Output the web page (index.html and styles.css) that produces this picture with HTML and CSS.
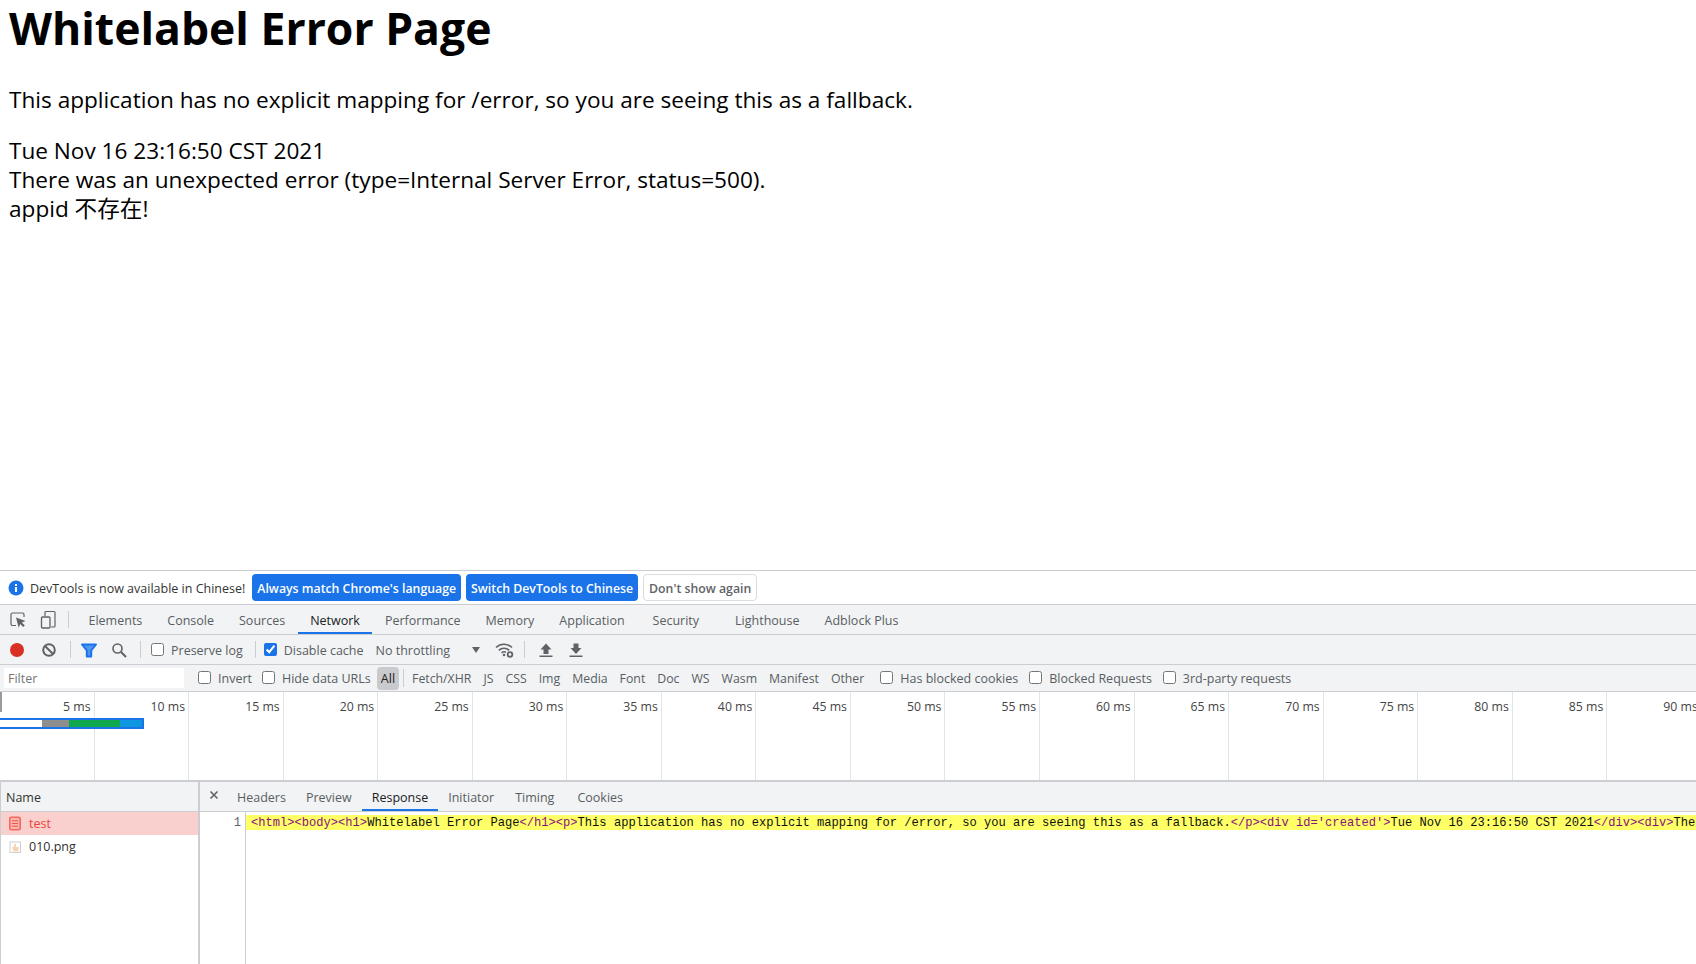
FILE: index.html
```html
<!DOCTYPE html>
<html lang="en">
<head>
<meta charset="utf-8">
<title>Whitelabel Error Page</title>
<link rel="stylesheet" href="styles.css">
</head>
<body>
<main class="page">
  <h1>Whitelabel Error Page</h1>
  <p>This application has no explicit mapping for /error, so you are seeing this as a fallback.</p>
  <div>Tue Nov 16 23:16:50 CST 2021</div>
  <div>There was an unexpected error (type=Internal Server Error, status=500).</div>
  <div>appid 不存在!</div>
</main>
<section class="devtools">
  <div class="infobar">
    <svg class="info-icon" width="16" height="16" viewBox="0 0 16 16"><circle cx="8" cy="8" r="7.5" fill="#1a73e8"/><rect x="7" y="7" width="2" height="5" fill="#fff"/><rect x="7" y="4" width="2" height="2" fill="#fff"/></svg>
    <span class="info-text">DevTools is now available in Chinese!</span>
    <button class="btn primary">Always match Chrome's language</button>
    <button class="btn primary">Switch DevTools to Chinese</button>
    <button class="btn plain">Don't show again</button>
  </div>
  <div class="tabbar">
    <svg class="tool" width="20" height="20" viewBox="0 0 20 20"><path d="M8 15.500H4.500A1.500 1.500 0 0 1 3 14V4.500A1.500 1.500 0 0 1 4.500 3h10A1.500 1.500 0 0 1 16 4.500V7" fill="none" stroke="#5f6368" stroke-width="1.200"/><path d="M8 7.500l9.500 3.500-3.700 1.500 3 3-1.600 1.600-3-3-1.500 3.700z" fill="#5f6368"/></svg>
    <svg class="tool" width="20" height="20" viewBox="0 0 20 20"><path d="M7 6V2.500a1 1 0 0 1 1-1h8a1 1 0 0 1 1 1V16a1 1 0 0 1-1 1h-3" fill="none" stroke="#5f6368" stroke-width="1.200"/><rect x="3.500" y="7" width="8.500" height="11" rx="1" fill="none" stroke="#5f6368" stroke-width="1.300"/></svg>
    <span class="sep tab-sep"></span>
    <span class="tab">Elements</span>
    <span class="tab">Console</span>
    <span class="tab">Sources</span>
    <span class="tab active">Network</span>
    <span class="tab">Performance</span>
    <span class="tab">Memory</span>
    <span class="tab">Application</span>
    <span class="tab tab-sec">Security</span>
    <span class="tab tab-far">Lighthouse</span>
    <span class="tab">Adblock Plus</span>
  </div>
  <div class="toolbar">
    <svg class="tool first-tool" width="18" height="18" viewBox="0 0 18 18"><circle cx="9" cy="9" r="7" fill="#d93025"/></svg>
    <svg class="tool clear" width="18" height="18" viewBox="0 0 18 18"><circle cx="9" cy="9" r="5.800" fill="none" stroke="#5f6368" stroke-width="2"/><path d="M5 5l8 8" stroke="#5f6368" stroke-width="2"/></svg>
    <span class="sep"></span>
    <svg class="tool funnel" width="18" height="18" viewBox="0 0 18 18"><path d="M2 3.500h14L11.200 9.500V15.500H6.800V9.500z" fill="#4f96f0" stroke="#1a73e8" stroke-width="2" stroke-linejoin="round"/></svg>
    <svg class="tool" width="18" height="18" viewBox="0 0 18 18"><circle cx="7.500" cy="7.500" r="4.500" fill="none" stroke="#5f6368" stroke-width="1.600"/><path d="M11 11l5 5" stroke="#5f6368" stroke-width="2"/></svg>
    <span class="sep"></span>
    <label class="check preserve"><input type="checkbox">Preserve log</label>
    <span class="sep"></span>
    <label class="check disable"><input type="checkbox" checked>Disable cache</label>
    <span class="throttle">No throttling</span>
    <span class="arrow"></span>
    <svg class="tool wifi" width="20" height="18" viewBox="0 0 20 18"><path d="M1 6.500a11.500 11.500 0 0 1 16 0M3.800 9.300a7.500 7.500 0 0 1 10.400 0M6.500 12a4 4 0 0 1 4.500-.8" fill="none" stroke="#5f6368" stroke-width="1.600"/><circle cx="9" cy="14" r="1.300" fill="#5f6368"/><circle cx="15" cy="13.500" r="2.300" fill="none" stroke="#5f6368" stroke-width="1.800"/></svg>
    <span class="sep"></span>
    <svg class="tool" width="18" height="18" viewBox="0 0 18 18"><path d="M9 2.500l5.500 6H11.500V13h-5V8.500H3.500zM2.500 14.500h13V16h-13z" fill="#5f6368"/></svg>
    <svg class="tool" width="18" height="18" viewBox="0 0 18 18"><path d="M6.500 2.500h5V7H14.500L9 13 3.500 7H6.500zM2.500 14.500h13V16h-13z" fill="#5f6368"/></svg>
  </div>
  <div class="filterbar">
    <span class="filter-input">Filter</span>
    <label class="check invert"><input type="checkbox">Invert</label>
    <label class="check"><input type="checkbox">Hide data URLs</label>
    <span class="chip">All</span>
    <span class="sep chip-sep"></span>
    <span class="type">Fetch/XHR</span>
    <span class="type">JS</span>
    <span class="type">CSS</span>
    <span class="type">Img</span>
    <span class="type">Media</span>
    <span class="type">Font</span>
    <span class="type">Doc</span>
    <span class="type">WS</span>
    <span class="type">Wasm</span>
    <span class="type">Manifest</span>
    <span class="type">Other</span>
    <label class="check blocked"><input type="checkbox">Has blocked cookies</label>
    <label class="check blocked"><input type="checkbox">Blocked Requests</label>
    <label class="check blocked"><input type="checkbox">3rd-party requests</label>
  </div>
  <div class="overview">
    <div class="ticks">
      <span class="tick">5 ms</span><span class="tick">10 ms</span><span class="tick">15 ms</span><span class="tick">20 ms</span><span class="tick">25 ms</span><span class="tick">30 ms</span><span class="tick">35 ms</span><span class="tick">40 ms</span><span class="tick">45 ms</span><span class="tick">50 ms</span><span class="tick">55 ms</span><span class="tick">60 ms</span><span class="tick">65 ms</span><span class="tick">70 ms</span><span class="tick">75 ms</span><span class="tick">80 ms</span><span class="tick">85 ms</span><span class="tick">90 ms</span>
    </div>
    <span class="marker"></span>
    <div class="bar"><span class="seg seg-white"></span><span class="seg seg-grey"></span><span class="seg seg-green"></span><span class="seg seg-blue"></span></div>
  </div>
  <div class="split">
    <aside class="list">
      <div class="list-head">Name</div>
      <div class="row selected">
        <svg width="14" height="15" viewBox="0 0 14 15"><rect x="1.800" y="1.300" width="10.400" height="12.400" rx="1.500" fill="#fbb4ae" stroke="#f2685c" stroke-width="1.600"/><path d="M4 4.800h6M4 7.500h6M4 10.200h6" stroke="#e8574b"/></svg>
        test
      </div>
      <div class="row">
        <svg width="14" height="14" viewBox="0 0 14 14"><rect x="2" y="2" width="10.500" height="10.500" fill="#fff" stroke="#d0d0d0"/><path d="M4 7h2V4h2v3h2.500v4.500H5.500z" fill="#f8d3b4"/></svg>
        010.png
      </div>
    </aside>
    <div class="detail">
      <div class="detail-tabs">
        <svg class="close" width="10" height="10" viewBox="0 0 10 10"><path d="M1.500 1.500l7 7M8.500 1.500l-7 7" stroke="#5f6368" stroke-width="1.600"/></svg>
        <span class="tab">Headers</span>
        <span class="tab">Preview</span>
        <span class="tab active">Response</span>
        <span class="tab">Initiator</span>
        <span class="tab tab-wide">Timing</span>
        <span class="tab">Cookies</span>
      </div>
      <div class="code">
        <div class="gutter">1</div>
        <div class="lines"><div class="line"><span class="tag">&lt;html&gt;&lt;body&gt;&lt;h1&gt;</span>Whitelabel Error Page<span class="tag">&lt;/h1&gt;&lt;p&gt;</span>This application has no explicit mapping for /error, so you are seeing this as a fallback.<span class="tag">&lt;/p&gt;&lt;div id='created'&gt;</span>Tue Nov 16 23:16:50 CST 2021<span class="tag">&lt;/div&gt;&lt;div&gt;</span>The</div></div>
      </div>
    </div>
  </div>
</section>
</body>
</html>
```
FILE: styles.css
```css
html, body {
  height: 100%;
}
body {
  margin: 0;
  height: 964px;
  overflow: hidden;
  display: flex;
  flex-direction: column;
  background: #fff;
  color: #000;
  font-family: "Open Sans", "Noto Sans CJK SC", sans-serif;
}
.page {
  height: 570px;
  flex: none;
  padding: 0 9px;
  box-sizing: border-box;
  font-size: 22.6px;
  line-height: 29px;
  overflow: hidden;
}
h1 {
  margin: 0 0 29px;
  font-size: 44.5px;
  line-height: 56px;
  font-weight: 700;
}
p {
  margin: 0 0 22px;
}
.devtools {
  flex: 1;
  min-height: 0;
  display: flex;
  flex-direction: column;
  border-top: 1px solid #cbcdd1;
  font-size: 12.5px;
  color: #5a5e63;
}
.infobar {
  height: 33px;
  flex: none;
  display: flex;
  align-items: center;
  padding-left: 8px;
  border-bottom: 1px solid #cbcdd1;
  background: #fff;
}
.info-icon {
  flex: none;
  margin-right: 6px;
}
.info-text {
  color: #333;
  margin-right: 7px;
  padding-top: 1px;
}
.btn {
  height: 27px;
  box-sizing: border-box;
  padding: 1px 5px 0;
  margin-right: 5px;
  border-radius: 4px;
  font: 600 12.3px "Open Sans", sans-serif;
  cursor: pointer;
}
.primary {
  background: #1a73e8;
  color: #fff;
  border: 0;
}
.plain {
  background: #fff;
  color: #5f6368;
  border: 1px solid #dadce0;
}
.tabbar, .toolbar, .filterbar, .list-head, .detail-tabs {
  background: #f1f3f4;
  display: flex;
  align-items: center;
  flex: none;
}
.tabbar {
  height: 29px;
  padding-left: 8px;
  border-bottom: 1px solid #cbcdd1;
}
.tool {
  flex: none;
}
.tabbar .tool {
  margin-right: 10px;
}
.sep {
  flex: none;
  width: 1px;
  height: 17px;
  margin: 0 6px;
  background: #cbcdd1;
}
.tab-sep {
  margin: 0 7px 0 0;
}
.tab {
  height: 100%;
  display: flex;
  align-items: center;
  padding: 1px 12.5px 0;
  box-sizing: border-box;
  white-space: nowrap;
}
.tab.active {
  color: #202124;
  border-bottom: 2px solid #1a73e8;
  padding-top: 3px;
}
.tab-sec {
  margin-left: 3px;
}
.tab-far {
  margin-left: 11px;
}
.toolbar {
  height: 29px;
  padding-left: 8px;
  border-bottom: 1px solid #cbcdd1;
}
.toolbar .tool {
  margin: 0 6px;
}
.toolbar .first-tool {
  margin-left: 0;
}
.toolbar .clear {
  margin-left: 8px;
}
.toolbar .funnel {
  margin-left: 3px;
}
.check {
  display: flex;
  align-items: center;
  white-space: nowrap;
}
.toolbar .check, .throttle {
  padding-top: 1px;
}
.check input {
  width: 13px;
  height: 13px;
  margin: 0 7px 2px 0;
  accent-color: #1a73e8;
}
.preserve {
  margin-left: 4px;
  margin-right: 6px;
}
.disable {
  margin-left: 2px;
}
.throttle {
  margin-left: 12px;
  width: 96px;
}
.arrow {
  width: 0;
  height: 0;
  border-left: 4px solid transparent;
  border-right: 4px solid transparent;
  border-top: 6px solid #5f6368;
  margin-right: 15px;
}
.toolbar .wifi {
  margin: 0 3px 0 0;
}
.filterbar {
  height: 26px;
  padding-left: 4px;
  border-bottom: 1px solid #cbcdd1;
}
.filter-input {
  width: 180px;
  height: 20px;
  flex: none;
  box-sizing: border-box;
  padding-left: 4px;
  line-height: 22px;
  background: #fff;
  color: #757575;
  margin-right: 14px;
}
.invert {
  margin-right: 10px;
}
.chip {
  margin-left: 6px;
  height: 23px;
  line-height: 23px;
  padding: 0 4px;
  border-radius: 4px;
  background: #c8cacd;
  color: #202124;
}
.chip-sep {
  height: 18px;
  margin: 0 2px 0 4px;
}
.type {
  padding: 0 6px;
  font-size: 12.3px;
  white-space: nowrap;
}
.blocked {
  margin-left: 10px;
}
.blocked + .blocked {
  margin-left: 11px;
}
.overview {
  position: relative;
  flex: none;
  height: 88px;
  background: #fff;
  border-bottom: 2px solid #cbcdd1;
  overflow: hidden;
}
.ticks {
  display: flex;
  height: 100%;
}
.tick {
  flex: none;
  width: 94.55px;
  box-sizing: border-box;
  text-align: right;
  padding: 6px 3px 0 0;
  border-right: 1px solid #e3e4e6;
  white-space: nowrap;
  color: #444;
  font-size: 12.3px;
}
.marker {
  position: absolute;
  left: 0;
  top: 0;
  width: 2px;
  height: 20px;
  background: #9a9a9a;
}
.bar {
  position: absolute;
  left: 0;
  top: 26px;
  width: 144px;
  height: 11px;
  box-sizing: border-box;
  border: 2px solid #1a73e8;
  border-left: 0;
  display: flex;
}
.seg {
  display: block;
  height: 100%;
}
.seg-white { width: 42px; background: #fff; }
.seg-grey { width: 27px; background: #8e8e8e; }
.seg-green { width: 51px; background: #0fa84f; }
.seg-blue { flex: 1; background: #0f96e0; }
.split {
  flex: 1;
  min-height: 0;
  display: flex;
  background: #fff;
}
.list {
  width: 197px;
  flex: none;
  border-left: 1px solid #cbcdd1;
  border-right: 2px solid #cbcdd1;
  color: #303030;
}
.list-head {
  height: 30px;
  padding: 1px 0 0 5px;
  box-sizing: border-box;
  border-bottom: 1px solid #cbcdd1;
  color: #333;
}
.row {
  height: 23px;
  display: flex;
  align-items: center;
  gap: 7px;
  padding-left: 7px;
}
.selected {
  background: #f9d0cd;
  color: #ee4438;
}
.detail {
  flex: 1;
  min-width: 0;
  display: flex;
  flex-direction: column;
}
.detail-tabs {
  height: 29px;
  padding-left: 9px;
  border-bottom: 1px solid #cbcdd1;
}
.close {
  margin-right: 8px;
  margin-bottom: 3px;
}
.detail-tabs .tab {
  padding: 1px 10px 0;
}
.detail-tabs .tab.active {
  padding-top: 3px;
}
.detail-tabs .tab-wide {
  padding-left: 11px;
  padding-right: 13px;
}
.code {
  flex: 1;
  display: flex;
  font: 12.1px/17px "Liberation Mono", monospace;
  overflow: hidden;
}
.gutter {
  width: 46px;
  flex: none;
  padding: 3px 4px 0 0;
  box-sizing: border-box;
  text-align: right;
  color: #606468;
  border-right: 1px solid #cbcdd1;
}
.lines {
  flex: 1;
  min-width: 0;
  padding-top: 3px;
}
.line {
  white-space: pre;
  height: 15px;
  padding-left: 5px;
  background: #ffff66;
  color: #111;
}
.tag {
  color: #881280;
}
```
